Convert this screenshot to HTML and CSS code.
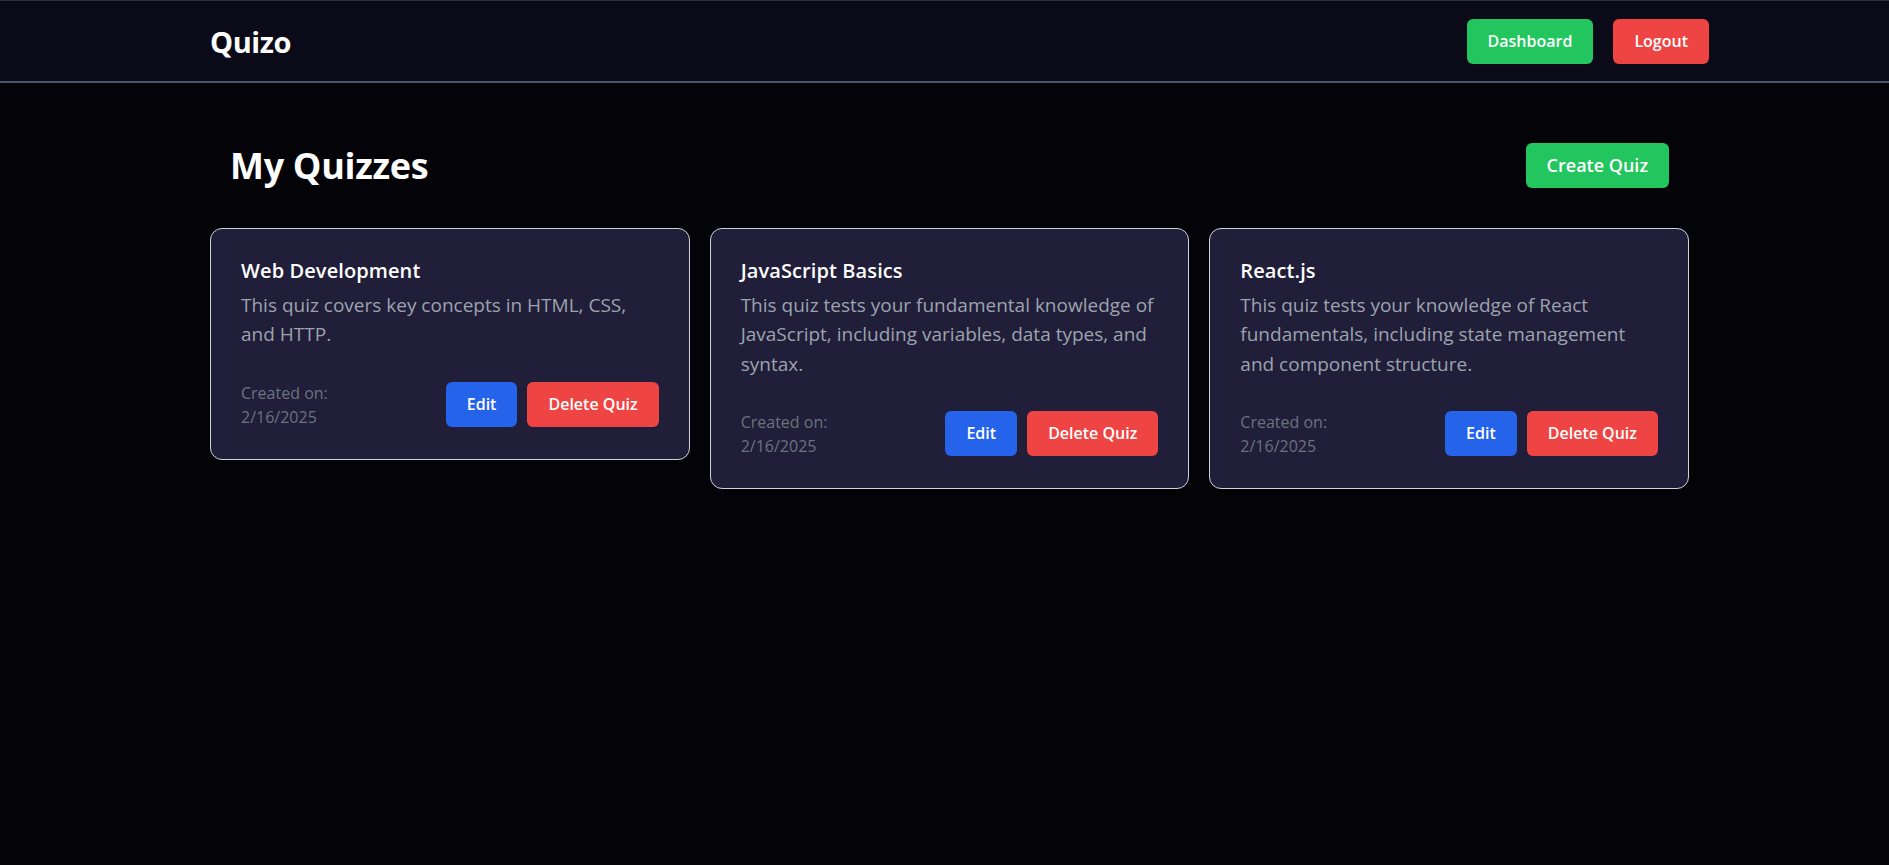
FILE: index.html
```html
<!DOCTYPE html>
<html lang="en">
<head>
<meta charset="utf-8">
<title>Quizo</title>
<link rel="stylesheet" href="styles.css">
</head>
<body>
<nav class="nav">
  <div class="nav-inner">
    <div class="brand">Quizo</div>
    <div class="nav-actions">
      <button class="btn btn-green">Dashboard</button>
      <button class="btn btn-red">Logout</button>
    </div>
  </div>
</nav>
<main class="main">
  <div class="head">
    <h1 class="title">My Quizzes</h1>
    <button class="btn btn-green btn-lg">Create Quiz</button>
  </div>
  <div class="grid">
    <div class="card">
      <h2 class="card-title">Web Development</h2>
      <p class="card-desc">This quiz covers key concepts in HTML, CSS, and HTTP.</p>
      <div class="card-foot">
        <div class="created">Created on:<br>2/16/2025</div>
        <div class="card-actions">
          <button class="btn btn-blue">Edit</button>
          <button class="btn btn-red">Delete Quiz</button>
        </div>
      </div>
    </div>
    <div class="card">
      <h2 class="card-title">JavaScript Basics</h2>
      <p class="card-desc">This quiz tests your fundamental knowledge of JavaScript, including variables, data types, and syntax.</p>
      <div class="card-foot">
        <div class="created">Created on:<br>2/16/2025</div>
        <div class="card-actions">
          <button class="btn btn-blue">Edit</button>
          <button class="btn btn-red">Delete Quiz</button>
        </div>
      </div>
    </div>
    <div class="card">
      <h2 class="card-title">React.js</h2>
      <p class="card-desc">This quiz tests your knowledge of React fundamentals, including state management and component structure.</p>
      <div class="card-foot">
        <div class="created">Created on:<br>2/16/2025</div>
        <div class="card-actions">
          <button class="btn btn-blue">Edit</button>
          <button class="btn btn-red">Delete Quiz</button>
        </div>
      </div>
    </div>
  </div>
</main>
</body>
</html>
```
FILE: styles.css
```css
* { box-sizing: border-box; }
html, body {
  margin: 0;
  padding: 0;
  background: #030308;
  font-family: "Open Sans", "Noto Sans", sans-serif;
  color: #fff;
  min-height: 100%;
}
body { min-height: 865px; }

.nav {
  background: #0a0a19;
  border-top: 1px solid #2e2e33;
  border-bottom: 2px solid #465568;
  height: 83px;
}
.nav-inner {
  height: 80px;
  display: flex;
  align-items: center;
  justify-content: space-between;
  padding: 0 180px 0 210px;
}
.brand {
  font-size: 29px;
  font-weight: 700;
  letter-spacing: -0.4px;
}
.nav-actions {
  display: flex;
  gap: 20px;
}

.btn {
  font-family: inherit;
  border: none;
  color: #fff;
  font-weight: 600;
  font-size: 16px;
  line-height: 25px;
  padding: 10px 21px;
  border-radius: 6px;
  cursor: pointer;
}
.btn-lg { font-size: 18px; padding: 10px 21px; }
.btn-green { background: #22c55e; }
.btn-red { background: #ef4444; }
.btn-blue { background: #2563eb; }

.main {
  width: 1689px;
  padding: 60px 0 0 210px;
}
.head {
  display: flex;
  align-items: center;
  justify-content: space-between;
  padding: 0 20px;
  height: 45px;
  margin-bottom: 40px;
}
.title {
  margin: 0;
  font-size: 36px;
  font-weight: 700;
  line-height: 40px;
  letter-spacing: -0.3px;
}

.grid {
  display: grid;
  grid-template-columns: repeat(3, 1fr);
  gap: 20px;
  align-items: start;
}
.card {
  background: #201e38;
  border: 1px solid #cfd2da;
  border-radius: 12px;
  padding: 28px 30px 30px;
}
.card-title {
  margin: 0 0 6px;
  font-size: 20px;
  font-weight: 600;
  line-height: 28px;
  letter-spacing: 0.1px;
}
.card-desc {
  margin: 0;
  font-size: 19px;
  line-height: 29.25px;
  color: #9ca3af;
}
.card-foot {
  margin-top: 31px;
  display: flex;
  align-items: center;
  justify-content: space-between;
}
.created {
  font-size: 16px;
  line-height: 24px;
  color: #6b7280;
}
.card-actions {
  display: flex;
  gap: 10px;
}
```
